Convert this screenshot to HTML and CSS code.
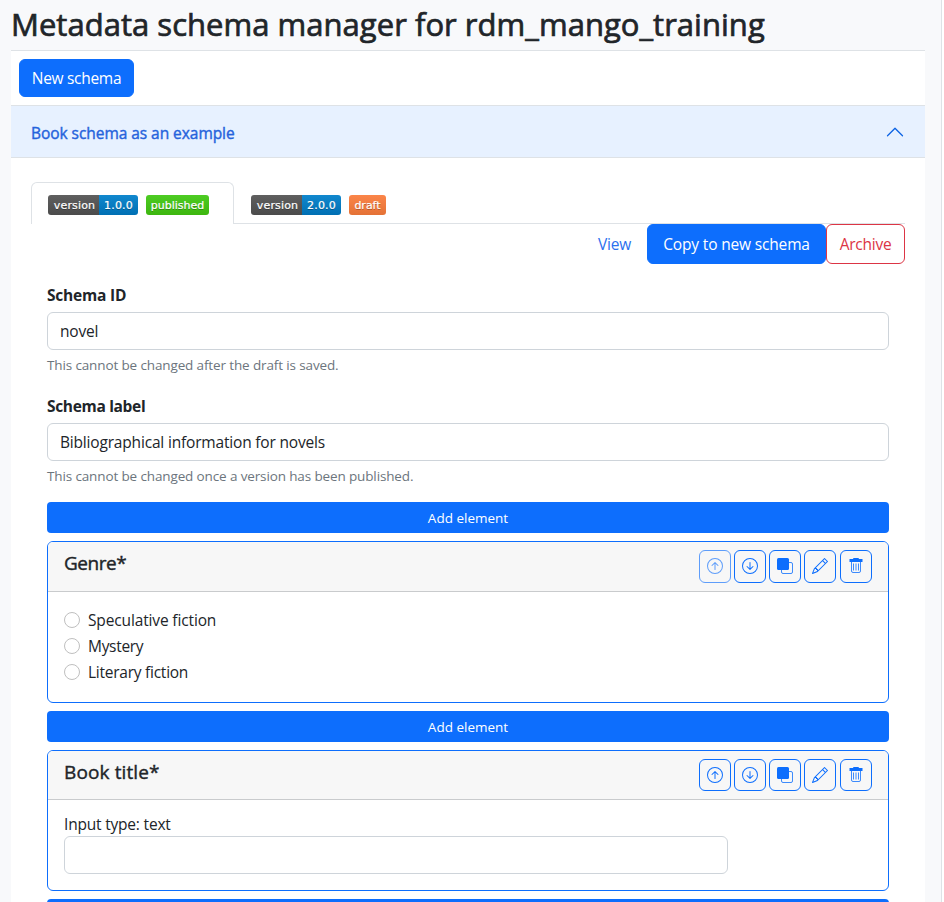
FILE: index.html
```html
<!DOCTYPE html>
<html lang="en">
<head>
<meta charset="utf-8">
<title>Metadata schema manager</title>
<link rel="stylesheet" href="styles.css">
</head>
<body>
<svg class="sprite" aria-hidden="true">
  <symbol id="up" viewBox="0 0 16 16"><path fill-rule="evenodd" d="M1 8a7 7 0 1 0 14 0A7 7 0 0 0 1 8m15 0A8 8 0 1 1 0 8a8 8 0 0 1 16 0m-7.500 3.500a.5.5 0 0 1-1 0V5.707L5.354 7.854a.5.5 0 1 1-.708-.708l3-3a.5.5 0 0 1 .708 0l3 3a.5.5 0 0 1-.708.708L8.500 5.707z"/></symbol>
  <symbol id="down" viewBox="0 0 16 16"><path fill-rule="evenodd" d="M1 8a7 7 0 1 0 14 0A7 7 0 0 0 1 8m15 0A8 8 0 1 1 0 8a8 8 0 0 1 16 0M8.500 4.500a.5.5 0 0 0-1 0v5.793L5.354 8.146a.5.5 0 1 0-.708.708l3 3a.5.5 0 0 0 .708 0l3-3a.5.5 0 0 0-.708-.708L8.500 10.293z"/></symbol>
  <symbol id="copy" viewBox="0 0 16 16"><rect x="0" y="0" width="12" height="12" rx="1.500"/><path d="M12 4.500h2A1.500 1.500 0 0 1 15.500 6v8a1.500 1.500 0 0 1-1.500 1.500H6A1.500 1.500 0 0 1 4.500 14v-2" fill="none" stroke="currentColor" stroke-width=".8"/></symbol>
  <symbol id="pencil" viewBox="0 0 16 16"><path d="M12.146.146a.5.5 0 0 1 .708 0l3 3a.5.5 0 0 1 0 .708l-10 10a.5.5 0 0 1-.168.110l-5 2a.5.5 0 0 1-.650-.650l2-5a.5.5 0 0 1 .110-.168zM11.207 2.500 13.500 4.793 14.793 3.500 12.500 1.207zm1.586 3L10.500 3.207 4 9.707V10h.5a.5.5 0 0 1 .5.5v.5h.5a.5.5 0 0 1 .5.5v.5h.293zm-9.761 5.175-.106.106-1.528 3.821 3.821-1.528.106-.106A.5.5 0 0 1 5 12.500V12h-.5a.5.5 0 0 1-.5-.5V11h-.5a.5.5 0 0 1-.468-.325z"/></symbol>
  <symbol id="trash" viewBox="0 0 16 16"><path d="M6 0h4a1 1 0 0 1 1 1h3.500v3h-13V1H5a1 1 0 0 1 1-1"/><path d="M3.500 4v9A1.500 1.500 0 0 0 5 14.500h6a1.500 1.500 0 0 0 1.500-1.500V4M5.500 5.500v7M8 5.500v7M10.500 5.500v7" fill="none" stroke="currentColor" stroke-width=".8"/></symbol>
</svg>
<div class="page">
  <h1><span class="t-title">Metadata schema manager for rdm_mango_training</span></h1>
  <main class="panel">
    <div class="toolbar"><button class="btn new"><span class="t-new">New schema</span></button></div>
    <div class="accordion"><span class="t-acc">Book schema as an example</span>
      <svg width="20" height="20" viewBox="0 0 16 16" fill="currentColor"><path d="M1.646 11.354a.5.5 0 0 0 .708 0L8 5.707l5.646 5.647a.5.5 0 0 0 .708-.708l-6-6a.5.5 0 0 0-.708 0l-6 6a.5.5 0 0 0 0 .708"/></svg>
    </div>
    <div class="content">
      <nav class="tabs">
        <a class="tab active"><span class="badge"><b class="dark">version</b><b class="blue">1.0.0</b></span><span class="badge"><b class="green">published</b></span></a>
        <a class="tab"><span class="badge"><b class="dark">version</b><b class="blue">2.0.0</b></span><span class="badge"><b class="orange">draft</b></span></a>
      </nav>
      <div class="actions"><a class="view"><span class="t-view">View</span></a><button class="btn copy"><span class="t-copy">Copy to new schema</span></button><button class="btn archive"><span class="t-arch">Archive</span></button></div>
      <form class="form">
        <div class="field"><label><span class="t-id">Schema ID</span></label><div class="input"><span class="t-novel">novel</span></div><p class="help"><span class="t-help">This cannot be changed after the draft is saved.</span></p></div>
        <div class="field"><label><span class="t-label">Schema label</span></label><div class="input"><span class="t-bib">Bibliographical information for novels</span></div><p class="help"><span class="t-help">This cannot be changed once a version has been published.</span></p></div>
        <div class="add"><span class="t-add">Add element</span></div>
        <section class="card genre">
          <header><h2><span class="t-genre">Genre*</span></h2>
            <div class="icons"><i class="icon disabled"><svg><use href="#up"/></svg></i><i class="icon"><svg><use href="#down"/></svg></i><i class="icon"><svg><use href="#copy"/></svg></i><i class="icon"><svg><use href="#pencil"/></svg></i><i class="icon last"><svg><use href="#trash"/></svg></i></div>
          </header>
          <div class="options">
            <div class="option"><span class="radio"></span><span class="t-spec">Speculative fiction</span></div>
            <div class="option"><span class="radio"></span><span class="t-myst">Mystery</span></div>
            <div class="option"><span class="radio"></span><span class="t-lit">Literary fiction</span></div>
          </div>
        </section>
        <div class="add"><span class="t-add">Add element</span></div>
        <section class="card book">
          <header><h2><span class="t-book">Book title*</span></h2>
            <div class="icons"><i class="icon"><svg><use href="#up"/></svg></i><i class="icon"><svg><use href="#down"/></svg></i><i class="icon"><svg><use href="#copy"/></svg></i><i class="icon"><svg><use href="#pencil"/></svg></i><i class="icon last"><svg><use href="#trash"/></svg></i></div>
          </header>
          <div class="textbody"><span class="t-input">Input type: text</span><div class="input short"></div></div>
        </section>
        <div class="add"></div>
      </form>
    </div>
  </main>
</div>
</body>
</html>
```
FILE: styles.css
```css
* { box-sizing: border-box; }
html, body { height: 902px; overflow: hidden; }
body { margin: 0; background: #fff; color: #212529; font: 400 15.500px/24px "Open Sans", "Noto Sans", sans-serif; }
.sprite { display: none; }
span { white-space: nowrap; }
.page { width: 942px; height: 902px; overflow: hidden; padding: 0 16px 0 11px; background: #f8f9fb; border-right: 1px solid #dee2e6; }
h1 { margin: 0; height: 50px; font-size: 31px; line-height: 48px; font-weight: 400; -webkit-text-stroke: .7px; letter-spacing: .03px; }
.panel { height: 852px; background: #fff; border-top: 1px solid #dee2e6; }
.toolbar { height: 54px; padding: 8px; }
.btn { display: flex; align-items: center; justify-content: center; padding: 0; border: 1px solid #0d6efd; border-radius: 6px; background: #0d6efd; color: #fff; font: inherit; }
.new { width: 115px; height: 38px; }
.accordion { display: flex; align-items: center; justify-content: space-between; height: 53px; padding: 2px 20px 0; border: solid #dee2e6; border-width: 1px 0; background: #e7f1ff; color: #2563dc; -webkit-text-stroke: .4px; letter-spacing: -.05px; }
.accordion svg { margin-bottom: 2px; color: #0c63e4; }
.content { padding: 24px 20px 0; }
.tabs { display: flex; height: 42px; border-bottom: 1px solid #dee2e6; }
.tab { display: flex; gap: 8px; height: 42px; padding: 12px 16px 0; border: 1px solid transparent; border-bottom: 0; }
.tab.active { width: 203px; background: #fff; border-color: #dee2e6; border-radius: 6px 6px 0 0; }
.badge { display: flex; height: 20px; border-radius: 3px; overflow: hidden; }
.badge b { display: flex; align-items: center; justify-content: center; height: 20px; padding-top: 2px; color: #fff; font: 400 11px/18px "DejaVu Sans", sans-serif; text-shadow: 0 1px 0 rgba(1, 1, 1, .3); -webkit-text-stroke: .2px; }
.badge .dark { width: 51px; padding-left: 2px; letter-spacing: .15px; background: linear-gradient(#5f5f5f, #4b4b4b); }
.blue { width: 39px; letter-spacing: .2px; background: linear-gradient(#1188ce, #006fb3); }
.green { width: 63px; background: linear-gradient(#4dcc23, #3db60f); }
.orange { width: 37px; background: linear-gradient(#fb8549, #e47236); }
.actions { display: flex; justify-content: flex-end; height: 40px; }
.view { display: flex; align-items: center; justify-content: center; width: 65px; color: #2b70ee; }
.copy { width: 179px; }
.archive { width: 79px; border-color: #dc3545; background: #fff; color: #dc3545; }
.form { padding: 20px 16px 0; }
.field { height: 111px; }
.field label { display: block; height: 28px; line-height: 22px; font-weight: 700; }
.input { display: flex; align-items: center; height: 38px; padding: 0 12px; border: 1px solid #ced4da; border-radius: 6px; background: #fff; }
.help { margin: 3px 0 0; color: #6c757d; font-size: 13.500px; line-height: 24px; }
.add { display: flex; align-items: center; justify-content: center; height: 31px; margin-bottom: 8px; border-radius: 4px; background: #0d6efd; color: #fff; font-size: 13.500px; }
.field + .add { margin-top: -4px; }
.card { margin-bottom: 8px; border: 1px solid #0d6efd; border-radius: 6px; overflow: hidden; }
.genre { height: 162px; }
.book { height: 141px; }
.card header { display: flex; justify-content: space-between; height: 50px; padding: 8px 16px; background: #f7f7f7; border-bottom: 1px solid #c9cbcd; }
.book header { height: 49px; }
.card h2 { margin: 0; font-size: 19px; line-height: 27px; font-weight: 400; -webkit-text-stroke: .4px; }
.icons { display: flex; gap: 3px; }
.icon { display: flex; align-items: center; justify-content: center; width: 32px; height: 33px; border: 1px solid #0d6efd; border-radius: 6px; color: #0d6efd; }
.genre .icon { padding-bottom: 1px; }
.book .icon { height: 32px; }
.icon svg { width: 16px; height: 16px; fill: currentColor; }
.icon.last { margin-left: 1px; }
.disabled { opacity: .65; }
.options { padding: 15px 16px; }
.option { display: flex; align-items: center; gap: 8px; height: 26px; }
.radio { width: 16px; height: 16px; border: 1px solid #bfbfbf; border-radius: 50%; }
.textbody { padding: 12px 16px; }
.textbody > span { display: block; height: 24px; line-height: 25px; }
.short { width: 664px; }

/* per-label tracking */
.t-new { letter-spacing: -.3px; }
.t-view { letter-spacing: -.2px; }
.t-copy { letter-spacing: -.16px; }
.t-arch { letter-spacing: -.25px; }
.t-id { letter-spacing: -.2px; }
.t-label { letter-spacing: -.33px; }
.t-novel { letter-spacing: -.2px; }
.t-bib { letter-spacing: -.18px; }
.t-help { letter-spacing: -.13px; }
.t-genre { letter-spacing: -.45px; }
.t-book { letter-spacing: .12px; }
.t-spec { letter-spacing: -.14px; }
.t-myst { letter-spacing: -.3px; }
.t-lit { letter-spacing: -.25px; }
.t-input { letter-spacing: -.2px; }
```
